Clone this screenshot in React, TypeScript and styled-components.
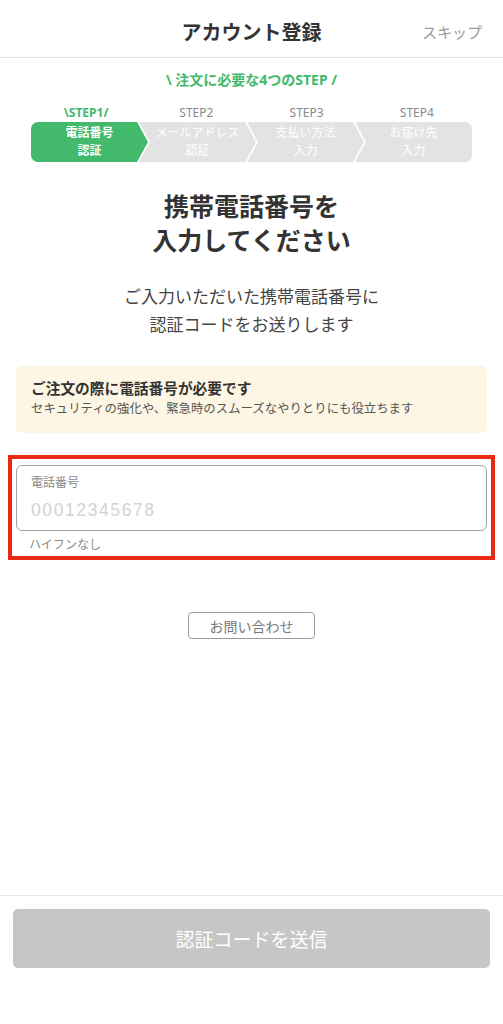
import React from 'react';
import styled, {createGlobalStyle} from "styled-components";

const green = "#42b96b";

const GlobalStyle = createGlobalStyle`
  html, body {
    margin: 0;
    padding: 0;
    background: #fff;
  }
  body {
    font-family: "Noto Sans", "Noto Sans CJK JP", sans-serif;
    color: #333;
  }
`;

const Page = styled.div`
  min-height: 100vh;
  display: flex;
  flex-direction: column;
`;

const Header = styled.header`
  height: 57px;
  border-bottom: 1px solid #e3e3e3;
  display: grid;
  grid-template-columns: 1fr auto 1fr;
  align-items: center;
`;

const Title = styled.h1`
  grid-column: 2;
  margin: 0;
  font-size: 20px;
  font-weight: 700;
  color: #333;
  padding-top: 6px;
`;

const Skip = styled.a`
  justify-self: end;
  padding-right: 21px;
  padding-top: 6px;
  font-size: 15px;
  color: #9a9a9a;
`;

const Main = styled.main`
  flex: 1;
  padding: 0 16px;
  display: flex;
  flex-direction: column;
`;

const StepsTitle = styled.div`
  margin-top: 12px;
  text-align: center;
  font-size: 14px;
  line-height: 20px;
  font-weight: 700;
  color: ${green};
`;

const Steps = styled.div`
  margin: 15px 15px 0;
`;

const StepLabels = styled.div`
  display: grid;
  grid-template-columns: repeat(4, 1fr);
`;

const StepLabel = styled.span<{ $active?: boolean }>`
  text-align: center;
  font-size: 12px;
  line-height: 16px;
  font-weight: ${p => p.$active ? 700 : 400};
  color: ${p => p.$active ? green : "#8a8a8a"};
`;

const StepBar = styled.div`
  display: flex;
  height: 40px;
  margin-top: 1px;
`;

const StepSeg = styled.div<{ $active?: boolean; $first?: boolean; $last?: boolean }>`
  flex: 1;
  margin-left: ${p => p.$first ? 0 : "-9px"};
  background: ${p => p.$active ? green : "#e3e3e3"};
  border-radius: ${p => p.$first ? "7px 0 0 7px" : p.$last ? "0 7px 7px 0" : 0};
  clip-path: ${p => p.$first
    ? "polygon(0 0, calc(100% - 11px) 0, 100% 50%, calc(100% - 11px) 100%, 0 100%)"
    : p.$last
      ? "polygon(0 0, 100% 0, 100% 100%, 0 100%, 11px 50%)"
      : "polygon(0 0, calc(100% - 11px) 0, 100% 50%, calc(100% - 11px) 100%, 0 100%, 11px 50%)"};
  display: flex;
  align-items: center;
  justify-content: center;
  text-align: center;
  color: #fff;
  font-size: 12px;
  line-height: 18px;
  font-weight: ${p => p.$active ? 700 : 400};
`;

const Heading = styled.h2`
  margin: 27px 0 0;
  text-align: center;
  font-size: 25px;
  line-height: 34px;
  font-weight: 700;
  color: #333;
`;

const Lead = styled.p`
  margin: 26px 0 0;
  text-align: center;
  font-size: 17px;
  line-height: 28px;
  color: #444;
`;

const Notice = styled.div`
  margin-top: 27px;
  background: #fdf6e4;
  border-radius: 6px;
  padding: 12px 15px 15px;
`;

const NoticeTitle = styled.div`
  font-size: 14.7px;
  line-height: 21px;
  font-weight: 700;
  color: #333;
`;

const NoticeText = styled.div`
  font-size: 12.4px;
  line-height: 19px;
  color: #555;
`;

const Highlight = styled.div`
  margin: 22px -8px 0;
  border: 4px solid #ea2a12;
  padding: 6px 4px 3px;
`;

const Field = styled.label`
  display: block;
  border: 1px solid #a3a3a3;
  border-radius: 6px;
  padding: 8px 14px 7px;
`;

const FieldLabel = styled.div`
  font-size: 12px;
  line-height: 17px;
  color: #8a8a8a;
`;

const FieldInput = styled.input`
  display: block;
  width: 100%;
  box-sizing: border-box;
  border: 0;
  outline: none;
  padding: 0;
  margin-top: 6px;
  height: 26px;
  font-family: "Liberation Sans", "Noto Sans", sans-serif;
  font-size: 17.5px;
  letter-spacing: 1.6px;
  background: transparent;
  &::placeholder {
    color: #d2d2d2;
  }
`;

const Hint = styled.div`
  margin: 6px 0 0 13px;
  font-size: 12px;
  line-height: 16px;
  color: #8a8a8a;
`;

const ContactButton = styled.button`
  align-self: center;
  margin-top: 52px;
  width: 127px;
  height: 27px;
  border: 1.5px solid #9c9c9c;
  border-radius: 4px;
  background: #fff;
  font-family: inherit;
  font-size: 14px;
  color: #7a7a7a;
  padding: 0;
`;

const Footer = styled.footer`
  border-top: 1px solid #e6e6e6;
  padding: 13px 13px 56px;
`;

const SubmitButton = styled.button`
  display: block;
  width: 100%;
  height: 59px;
  border: 0;
  border-radius: 5px;
  background: #c6c6c6;
  color: #fff;
  font-family: inherit;
  font-size: 19px;
  font-weight: 400;
`;

const steps = [
    {label: "STEP1", text: ["電話番号", "認証"]},
    {label: "STEP2", text: ["メールアドレス", "認証"]},
    {label: "STEP3", text: ["支払い方法", "入力"]},
    {label: "STEP4", text: ["お届け先", "入力"]},
];

function App() {
    const current = 0;
    return (
        <Page>
            <GlobalStyle/>
            <Header>
                <Title>アカウント登録</Title>
                <Skip>スキップ</Skip>
            </Header>
            <Main>
                <StepsTitle>\ 注文に必要な4つのSTEP /</StepsTitle>
                <Steps>
                    <StepLabels>
                        {steps.map((s, i) => (
                            <StepLabel key={s.label} $active={i === current}>
                                {i === current ? `\\${s.label}/` : s.label}
                            </StepLabel>
                        ))}
                    </StepLabels>
                    <StepBar>
                        {steps.map((s, i) => (
                            <StepSeg key={s.label} $active={i === current}
                                     $first={i === 0} $last={i === steps.length - 1}>
                                <span>{s.text[0]}<br/>{s.text[1]}</span>
                            </StepSeg>
                        ))}
                    </StepBar>
                </Steps>
                <Heading>携帯電話番号を<br/>入力してください</Heading>
                <Lead>ご入力いただいた携帯電話番号に<br/>認証コードをお送りします</Lead>
                <Notice>
                    <NoticeTitle>ご注文の際に電話番号が必要です</NoticeTitle>
                    <NoticeText>セキュリティの強化や、緊急時のスムーズなやりとりにも役立ちます</NoticeText>
                </Notice>
                <Highlight>
                    <Field>
                        <FieldLabel>電話番号</FieldLabel>
                        <FieldInput type="tel" placeholder="00012345678"/>
                    </Field>
                    <Hint>ハイフンなし</Hint>
                </Highlight>
                <ContactButton>お問い合わせ</ContactButton>
            </Main>
            <Footer>
                <SubmitButton>認証コードを送信</SubmitButton>
            </Footer>
        </Page>
    );
}

export default App;
